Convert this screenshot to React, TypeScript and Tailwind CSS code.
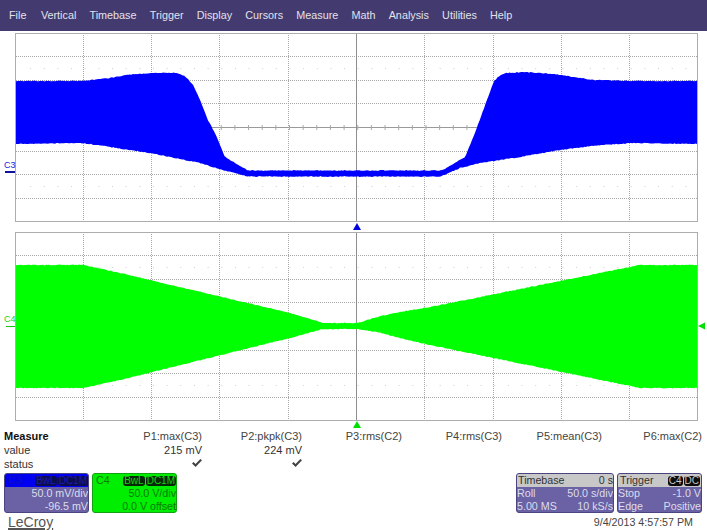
const menu = ['Vertical', 'Timebase', 'Trigger', 'Display', 'Cursors', 'Measure', 'Math', 'Analysis', 'Utilities', 'Help'];

const columns = [
  { label: 'P1:max(C3)', value: '215 mV', ok: true },
  { label: 'P2:pkpk(C3)', value: '224 mV', ok: true },
  { label: 'P3:rms(C2)' },
  { label: 'P4:rms(C3)' },
  { label: 'P5:mean(C3)' },
  { label: 'P6:max(C2)' },
];

type Pt = [number, number];

// envelopes are in page coordinates, traced off the screen
const blueTop: Pt[] = [[16, 81], [83, 81], [110, 78], [130, 74.5], [165, 72.5], [178, 73], [186, 77], [193, 85], [200, 100], [208, 120], [215, 133], [225, 157], [248, 170.5], [442, 170.5], [465, 157], [476, 130], [487, 100], [494, 81], [500, 75], [507, 73], [524, 72], [554, 74], [594, 80], [634, 81], [697, 81]];
const blueBottom: Pt[] = [[16, 144], [83, 143], [110, 147], [150, 153], [190, 161], [200, 163], [219, 169], [248, 176.5], [441, 176.5], [460, 168], [480, 163], [520, 157], [560, 150], [600, 145], [634, 143], [697, 144]];
const greenTop: Pt[] = [[16, 265], [83, 265], [120, 273], [290, 313], [323, 323], [358, 323], [373, 318], [400, 312], [430, 307], [640, 265], [697, 265]];
const greenBottom: Pt[] = [[16, 388], [83, 388], [120, 380], [290, 338], [323, 329], [358, 329], [377, 332], [400, 338], [430, 345], [640, 388], [697, 388]];

const lerp = (pts: Pt[], x: number) => {
  for (let i = 1; i < pts.length; i++) {
    if (x <= pts[i][0]) {
      const [x0, y0] = pts[i - 1];
      const [x1, y1] = pts[i];
      return y0 + ((y1 - y0) * (x - x0)) / (x1 - x0);
    }
  }
  return pts[pts.length - 1][1];
};

const noise = (x: number) => {
  const s = Math.sin(x * 12.9898) * 43758.5453;
  return (s - Math.floor(s) - 0.5) * 0.8;
};

const envelope = (top: Pt[], bottom: Pt[]) => {
  const up: string[] = [];
  const down: string[] = [];
  for (let x = 16; x <= 697; x += 1.5) {
    up.push(`${x},${(lerp(top, x) + noise(x)).toFixed(1)}`);
    down.unshift(`${x},${(lerp(bottom, x) + noise(x + 7)).toFixed(1)}`);
  }
  return [...up, ...down].join(' ');
};

const vLines = [83.5, 151.5, 219.5, 288.5, 424.5, 493.5, 561.5, 629.5];
const ticks = Array.from({ length: 49 }, (_, i) => 16.5 + i * 13.65 + 13.65).filter((x) => x < 696);

function Scope({ top, height, color, lower }: { top: number; height: number; color: string; lower: Pt[] }) {
  const center = top + 94;
  const rows = [-71, -47, -24, 24, 47, 71].map((d) => center + d + 0.5);
  const dots = [center - 59 + 0.5, center + 59 + 0.5];
  const upper = color === '#0000ff' ? blueTop : greenTop;
  return (
    <div className="w-[683px] border border-[#adadad] bg-white" style={{ height }}>
      <svg width="681" height={height - 2} viewBox={`16 ${top + 1} 681 ${height - 2}`} className="block">
        {vLines.map((x) => (
          <line key={x} x1={x} x2={x} y1={top} y2={top + height} stroke="#a8a8a8" strokeDasharray="1 1" />
        ))}
        {rows.map((y) => (
          <line key={y} x1={16} x2={697} y1={y} y2={y} stroke="#a8a8a8" strokeDasharray="1 1" />
        ))}
        {dots.map((y) =>
          ticks.map((x) => <rect key={`${y}-${x}`} x={x} y={y - 0.5} width="1" height="1" fill="#cfcfcf" />),
        )}
        <line x1={16} x2={697} y1={center + 0.5} y2={center + 0.5} stroke="#9a9a9a" />
        {ticks.map((x) => (
          <line key={x} x1={x} x2={x} y1={center - 2} y2={center + 3} stroke="#a8a8a8" />
        ))}
        <line x1={356.5} x2={356.5} y1={top} y2={top + height} stroke="#8e8e8e" />
        <polygon points={envelope(upper, lower)} fill={color} />
      </svg>
    </div>
  );
}

function Check() {
  return (
    <svg width="10" height="8" viewBox="0 0 10 8" className="mb-[2px]">
      <path d="M0 4.5 1.6 3 3.5 5 8.4 0 10 1.2 3.6 8Z" fill="#444" />
    </svg>
  );
}

function Tag({ className, children }: { className: string; children: string }) {
  return <span className={`rounded-[3px] px-[1px] text-[10px] leading-[10px] ${className}`}>{children}</span>;
}

function Row({ className, left, right }: { className?: string; left?: string; right: string }) {
  return (
    <div className={`flex h-[13px] items-center justify-between leading-[13px] ${className ?? ''}`}>
      <span>{left}</span>
      <span>{right}</span>
    </div>
  );
}

export default function App() {
  return (
    <div className="relative h-[530px] w-[707px] overflow-hidden bg-white font-['Liberation_Sans',Arial,sans-serif] text-[11px] text-[#333]">
      <nav className="flex h-[31px] items-center gap-[13.2px] bg-[#433a70] pl-[9px] text-[10.8px] text-[#e2e2ea]">
        <span className="mr-[1.3px]">File</span>
        {menu.map((m) => (
          <span key={m}>{m}</span>
        ))}
      </nav>

      <main className="pl-[15px] pt-[2px]">
        <div className="relative">
          <Scope top={33} height={189} color="#0000ff" lower={blueBottom} />
          <span className="absolute left-[-11px] top-[127px] text-[9px] leading-[10px] text-[#2020e0]">C3</span>
          <span className="absolute left-[-10px] top-[138px] h-[2px] w-[10px] bg-[#1010a0]" />
        </div>
        <div className="relative mt-[10px]">
          <Scope top={232} height={189} color="#00ff00" lower={greenBottom} />
          <span className="absolute left-[-11px] top-[82px] text-[9px] leading-[10px] text-[#22d022]">C4</span>
          <span className="absolute left-[-9px] top-[94px] h-[1px] w-[9px] bg-[#18c018]" />
          <svg width="8" height="8" viewBox="0 0 8 8" className="absolute left-[683px] top-[90px]">
            <path d="M0 4 7 0.5V7.5Z" fill="#00e000" />
          </svg>
          <svg width="8" height="7" viewBox="0 0 8 7" className="absolute left-[338px] top-[-9px]">
            <path d="M4 0 8 7H0Z" fill="#0000e0" />
          </svg>
          <svg width="8" height="7" viewBox="0 0 8 7" className="absolute left-[338px] top-[189px]">
            <path d="M4 0 8 7H0Z" fill="#00e000" />
          </svg>
        </div>
      </main>

      <section className="mt-[8px] grid grid-cols-[102px_repeat(6,100px)] auto-rows-[14px] leading-[14px]">
        <span className="pl-[4px] font-bold text-[#111]">Measure</span>
        {columns.map((c) => (
          <span key={c.label} className="text-right text-[#444]">{c.label}</span>
        ))}
        <span className="pl-[4px]">value</span>
        {columns.map((c) => (
          <span key={c.label} className="text-right">{c.value}</span>
        ))}
        <span className="pl-[4px]">status</span>
        {columns.map((c) => (
          <span key={c.label} className="flex items-center justify-end">{c.ok && <Check />}</span>
        ))}
      </section>

      <section className="mt-[2px] flex h-[40px] pl-[4px] pr-[5px] text-[10.7px]">
        <div className="w-[85px] overflow-hidden rounded-[3px] border border-[#4a4480] bg-[#6a62a4] text-[#dcdcec]">
          <div className="flex h-[13px] items-center justify-between bg-[#0000f0] pl-[3px] text-[#1010c0]">
            <span>C3</span>
            <div className="flex gap-[1px]">
              <Tag className="bg-[#0c0c50] text-[#1a1ab8]">BwL</Tag>
              <Tag className="bg-[#0c0c50] text-[#1a1ab8]">DC1M</Tag>
            </div>
          </div>
          <Row right="50.0 mV/div" />
          <Row right="-96.5 mV" />
        </div>
        <div className="ml-[3px] w-[85px] overflow-hidden rounded-[3px] border border-[#10a010] bg-[#00ee00] text-[#0a7a0a]">
          <div className="flex h-[13px] items-center justify-between pl-[3px]">
            <span>C4</span>
            <div className="flex gap-[1px]">
              <Tag className="bg-[#062806] text-[#18d018]">BwL</Tag>
              <Tag className="bg-[#062806] text-[#18d018]">DC1M</Tag>
            </div>
          </div>
          <Row right="50.0 V/div" />
          <Row right="0.0 V offset" />
        </div>

        <div className="ml-auto w-[98px] overflow-hidden rounded-[3px] border border-[#4a4480] bg-[#6a62a4] text-[#dcdcec]">
          <Row className="bg-[#c8c8c8] pl-[1px] text-[#333]" left="Timebase" right="0 s" />
          <Row left="Roll" right="50.0 s/div" />
          <Row left="5.00 MS" right="10 kS/s" />
        </div>
        <div className="ml-[3px] w-[85px] overflow-hidden rounded-[3px] border border-[#4a4480] bg-[#6a62a4] text-[#dcdcec]">
          <div className="flex h-[13px] items-center justify-between bg-[#c8c8c8] pl-[2px] pr-[1px] text-[#333]">
            <span>Trigger</span>
            <div className="flex gap-[1px]">
              <Tag className="bg-[#0c0c0c] text-[#c8c8c8]">C4</Tag>
              <Tag className="bg-[#0c0c0c] text-[#c8c8c8]">DC</Tag>
            </div>
          </div>
          <Row left="Stop" right="-1.0 V" />
          <Row left="Edge" right="Positive" />
        </div>
      </section>

      <footer className="flex h-[17px] items-center justify-between pl-[8px] pr-[14px]">
        <span className="text-[14px] leading-[14px] text-[#555] underline decoration-2 underline-offset-[1px]">LeCroy</span>
        <span className="pt-[1px] text-[10.7px] text-[#444]">9/4/2013 4:57:57 PM</span>
      </footer>
    </div>
  );
}
